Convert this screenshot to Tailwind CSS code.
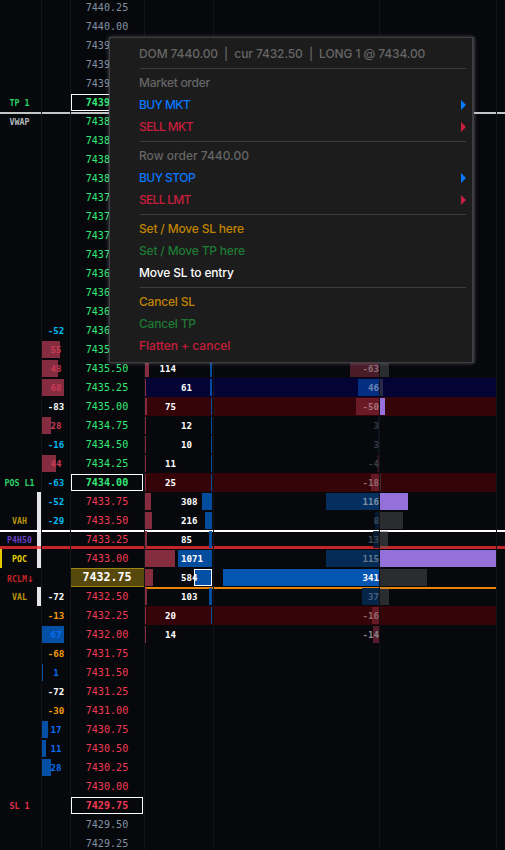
<!DOCTYPE html>
<html lang="en">
<head>
  <meta charset="UTF-8" />
  <meta name="viewport" content="width=device-width, initial-scale=1.0" />
  <title>DOM Ladder</title>
  <script src="https://cdn.jsdelivr.net/npm/@tailwindcss/browser@4"></script>
</head>
<body class="relative w-[505px] h-[850px] overflow-hidden bg-[#06080c] font-['DejaVu_Sans_Mono',monospace]">

  <div id="ladder" class="-mt-0.5"></div>

  <!-- context menu -->
  <div class="absolute left-[109px] top-[37px] w-[365px] h-[326px] pt-[5px] pl-[29px] pr-[6px] bg-[#1c1c1c] border border-r-2 border-[#3f3f43] shadow-[0_0_4px_rgba(150,150,160,0.55)] font-[Inter,sans-serif] text-[12px] font-medium text-[#666]">
    <div class="h-[22px] flex items-center whitespace-pre"><span class="tracking-[-0.11px]">DOM 7440.00  |  cur 7432.50  |  LONG 1 @ 7434.00</span></div>
    <div class="h-[7px] pl-px flex items-center"><div class="h-px w-full bg-[#3e3e3e]"></div></div>
    <div class="h-[22px] flex items-center"><span class="tracking-[-0.28px]">Market order</span></div>
    <div class="h-[22px] flex items-center justify-between text-[#0a78ff]"><span class="tracking-[-0.6px]">BUY MKT</span><svg class="w-[5px] h-[10px]" viewBox="0 0 5 10"><path fill="currentColor" d="M0 0L5 5L0 10Z" /></svg></div>
    <div class="h-[22px] flex items-center justify-between text-[#c81e3c]"><span class="tracking-[-0.6px]">SELL MKT</span><svg class="w-[5px] h-[10px]" viewBox="0 0 5 10"><path fill="currentColor" d="M0 0L5 5L0 10Z" /></svg></div>
    <div class="h-[7px] pl-px flex items-center"><div class="h-px w-full bg-[#3e3e3e]"></div></div>
    <div class="h-[22px] flex items-center"><span>Row order 7440.00</span></div>
    <div class="h-[22px] flex items-center justify-between text-[#0a78ff]"><span class="tracking-[-0.55px]">BUY STOP</span><svg class="w-[5px] h-[10px]" viewBox="0 0 5 10"><path fill="currentColor" d="M0 0L5 5L0 10Z" /></svg></div>
    <div class="h-[22px] flex items-center justify-between text-[#c81e3c]"><span class="tracking-[-0.7px]">SELL LMT</span><svg class="w-[5px] h-[10px]" viewBox="0 0 5 10"><path fill="currentColor" d="M0 0L5 5L0 10Z" /></svg></div>
    <div class="h-[7px] pl-px flex items-center"><div class="h-px w-full bg-[#3e3e3e]"></div></div>
    <div class="h-[22px] flex items-center text-[#c08400]"><span class="tracking-[-0.18px]">Set / Move SL here</span></div>
    <div class="h-[22px] flex items-center text-[#1e7a34]"><span class="tracking-[-0.18px]">Set / Move TP here</span></div>
    <div class="h-[22px] flex items-center text-white"><span class="tracking-[-0.15px]">Move SL to entry</span></div>
    <div class="h-[7px] pl-px flex items-center"><div class="h-px w-full bg-[#3e3e3e]"></div></div>
    <div class="h-[22px] flex items-center text-[#c08400]"><span class="tracking-[-0.2px]">Cancel SL</span></div>
    <div class="h-[22px] flex items-center text-[#1e7a34]"><span class="tracking-[-0.2px]">Cancel TP</span></div>
    <div class="h-[22px] flex items-center text-[#c81e3c]"><span>Flatten + cancel</span></div>
  </div>

  <script>
    // tags in the first column
    const tags = {
      5: ['TP 1', 'text-[#2bd468]'],
      6: ['VWAP', 'text-[#b4b8bc]'],
      25: ['POS L1', 'text-[#2bd468]'],
      27: ['VAH', 'text-[#b8960a]'],
      28: ['P4H50', 'text-[#6a3fc0]'],
      29: ['POC', 'text-[#e8d000]'],
      30: ['RCLM<span class="text-[11px] leading-none tracking-[-1.6px]">↓</span>', 'text-[#c42626]'],
      31: ['VAL', 'text-[#b8960a]'],
      42: ['SL 1', 'text-[#e0304e]'],
    };

    const cyan = 'text-[#00b8f0]', white = 'text-white', orange = 'text-[#f59a0a]';
    const rose = 'text-[#c83a54]', blue = 'text-[#0a6cf0]';
    const roseBar = 'bg-[#862c40]', blueBar = 'bg-[#0450a4]';

    // value, text colour, bar width, bar colour
    const delta = {
      17: ['-52', cyan], 18: ['55', rose, 18, roseBar], 19: ['48', rose, 16, roseBar],
      20: ['68', rose, 22, roseBar], 21: ['-83', white], 22: ['28', rose, 9, roseBar],
      23: ['-16', cyan], 24: ['44', rose, 14, roseBar], 25: ['-63', cyan],
      26: ['-52', cyan], 27: ['-29', cyan], 31: ['-72', white], 32: ['-13', orange],
      33: ['67', blue, 22, blueBar], 34: ['-68', orange], 35: ['1', blue, 1, blueBar],
      36: ['-72', white], 37: ['-30', orange], 38: ['17', blue, 6, blueBar],
      39: ['11', blue, 4, blueBar], 40: ['28', blue, 9, blueBar],
    };

    // bid bar, ask bar, bid text, ask text
    const trades = {
      19: [4, 2, '114', ''], 20: [1, 2, '', '61'], 21: [2, 1, '75', ''],
      22: [1, 1, '', '12'], 23: [1, 1, '', '10'], 24: [1, 1, '11', ''],
      25: [1, 1, '25', ''], 26: [6, 10, '', '308'], 27: [7, 7, '', '216'],
      28: [2, 3, '', '85'], 29: [30, 34, '', '1071'], 30: [8, 18, '', '584'],
      31: [2, 3, '', '103'], 32: [1, 1, '20', ''], 33: [1, 0, '14', ''],
    };

    // value, bar width, bar colour, text colour
    const net = {
      19: ['-63', 29, 'bg-[#4a1b28]', 'text-[#8c7078]'],
      20: ['46', 21, 'bg-[#042e80]', 'text-[#6c86b8]'],
      21: ['-50', 23, 'bg-[#691a25]', 'text-[#a87078]'],
      22: ['3', 1, 'bg-[#04182e]', 'text-[#3a3e42]'],
      23: ['3', 1, 'bg-[#04182e]', 'text-[#3a3e42]'],
      24: ['-4', 2, 'bg-[#2e121b]', 'text-[#3e3e42]'],
      25: ['-18', 8, 'bg-[#641924]', 'text-[#96686e]'],
      26: ['116', 53, 'bg-[#042f5e]', 'text-[#7890a8]'],
      27: ['8', 4, 'bg-[#041a34]', 'text-[#3a4858]'],
      28: ['13', 6, 'bg-[#061b35]/85', 'text-[#3e4a58]'],
      29: ['115', 53, 'bg-[#042a56]', 'text-[#64798e]'],
      30: ['341', 156, 'bg-[#0456b2]', 'text-white'],
      31: ['37', 17, 'bg-[#042448]', 'text-[#4a607a]'],
      32: ['-16', 7, 'bg-[#641924]', 'text-[#96686e]'],
      33: ['-14', 6, 'bg-[#541c2a]', 'text-[#8c8488]'],
    };

    const gray = 'bg-[#808080]/30', purple = 'bg-[#9470db]';
    const profile = {
      19: [9, gray], 20: [3, gray], 21: [5, purple], 25: [1, gray], 26: [28, purple],
      27: [23, gray], 28: [8, 'bg-[#606060]/45'], 29: [116, purple], 30: [47, gray], 31: [9, gray],
    };

    const rowBg = { 20: 'bg-[#040335]', 21: 'bg-[#350408]', 25: 'bg-[#350408]', 32: 'bg-[#350408]' };

    // horizontal levels, drawn per cell so that the column rules stay on top
    const levels = {
      6: '<i class="absolute inset-x-0 top-0 h-0.5 bg-[#c4c6c6]"></i>',
      28: '<i class="absolute inset-x-0 top-0 h-0.5 bg-white"></i><i class="absolute inset-x-0 bottom-0 h-[3px] bg-[#c22628]"></i>',
    };
    const stopLevel = '<i class="absolute inset-x-0 top-0 h-0.5 bg-[#e8860c]"></i>';

    const bar = (w, cls) => w ? `<i class="absolute top-px h-[17px] ${cls}" style="width:${w}px"></i>` : '';
    const cell = 'relative h-[19px] flex items-center border-r border-[#111317]';

    let html = '';
    for (let i = 0; i < 45; i++) {
      const price = (7440.25 - i * 0.25).toFixed(2);
      const line = levels[i] || '';
      const line2 = i === 31 ? stopLevel : line;
      const bg = rowBg[i] || '';

      const tag = tags[i] ? `<span class="relative top-px w-[39px] text-center ${tags[i][1]}">${tags[i][0]}</span>` : '';
      let marks = (i >= 26 && i <= 29) || i === 31 ? '<i class="absolute right-0 inset-y-0 w-1 bg-[#e6e6e6]"></i>' : '';
      if (i === 28) marks += '<i class="absolute right-0 bottom-0 w-1 h-[3px] bg-[#f05a5c]"></i><i class="absolute right-0 top-0 w-1 h-0.5 bg-white"></i>';
      if (i === 29) marks += '<i class="absolute left-0 inset-y-0 w-0.5 bg-[#e8c800]"></i>';

      const d = delta[i];
      const t = trades[i];
      const n = net[i];
      const p = profile[i];

      let priceCls = i < 5 || i > 42 ? 'top-px text-[#8290a0]' : i < 26 ? 'top-px text-[#34e878]' : 'top-px text-[#f23a54]';
      let priceBox = '';
      if (i === 5 || i === 25 || i === 42) {
        priceCls += ' font-bold';
        priceBox = '<i class="absolute left-0 right-px inset-y-px border border-white"></i>';
      }
      if (i === 30) {
        priceCls = 'font-bold text-white text-[11.65px]';
        priceBox = '<i class="absolute inset-0 bg-[#57490c] border-y border-[#a08610]"></i>';
      }

      html += `
        <div class="grid grid-cols-[42px_29px_74px_69px_166px_117px_8px] h-[19px] text-[9.15px] leading-none font-bold">
          <div class="${cell} text-[8.3px]">${line}${marks}${tag}</div>
          <div class="${cell} justify-center">${line}${d ? bar(d[2], 'left-0 ' + d[3]) + `<span class="relative top-px ${d[1]}">${d[0]}</span>` : ''}</div>
          <div class="${cell} justify-center font-normal text-[10.1px]">${line}${priceBox}<span class="relative right-[0.5px] ${priceCls}">${price}</span></div>
          <div class="${cell} ${bg} text-white">${line2}${t ? bar(t[0], 'left-0 bg-[#8c2e42]/95') + bar(t[1], i === 30 ? 'right-px bg-[#0450a4] border border-white' : 'right-px bg-[#0450a4]/95') +
            `<span class="relative top-px w-[31px] text-right">${t[2]}</span><span class="relative top-px ml-[5px]">${t[3]}</span>` : ''}</div>
          <div class="${cell} ${bg} justify-end">${line2}${n ? bar(n[1], 'right-0 ' + n[2]) + `<span class="relative top-px ${n[3]}">${n[0]}</span>` : ''}</div>
          <div class="${cell} ${bg}">${line2}${p ? bar(p[0], 'left-0 ' + p[1]) : ''}</div>
          <div class="relative">${line}</div>
        </div>`;
    }
    document.getElementById('ladder').innerHTML = html;
  </script>
</body>
</html>
